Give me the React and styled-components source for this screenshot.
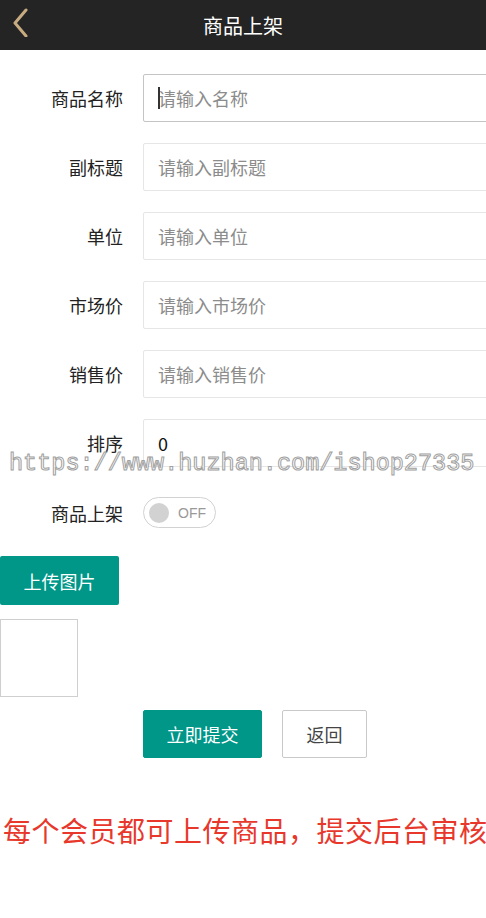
import styled, {createGlobalStyle} from "styled-components";

const GlobalStyle = createGlobalStyle`
  html, body {
    margin: 0;
    padding: 0;
    background: #fff;
    overflow-x: hidden;
  }
  body {
    font-family: "Noto Sans CJK SC", "Noto Sans", sans-serif;
    color: #333;
  }
`;

const fields = [
    {label: "商品名称", placeholder: "请输入名称", focus: true},
    {label: "副标题", placeholder: "请输入副标题"},
    {label: "单位", placeholder: "请输入单位"},
    {label: "市场价", placeholder: "请输入市场价"},
    {label: "销售价", placeholder: "请输入销售价"},
    {label: "排序", value: "0"},
];

export default function App() {
    return (
        <Page>
            <GlobalStyle/>
            <Header>
                <BackIcon width="20" height="30" viewBox="0 0 20 30">
                    <path d="M15 3 L4 16 L15 29" fill="none" stroke="#c8ab80" strokeWidth="3" strokeLinecap="round"
                          strokeLinejoin="round"/>
                </BackIcon>
                <Title>商品上架</Title>
            </Header>

            <Form>
                {fields.map((f) => (
                    <Row key={f.label}>
                        <Label>{f.label}</Label>
                        <Input focus={f.focus}>
                            {f.focus && <Caret/>}
                            {f.value ? <Value>{f.value}</Value> : <Placeholder>{f.placeholder}</Placeholder>}
                        </Input>
                    </Row>
                ))}

                <SwitchRow>
                    <Label>商品上架</Label>
                    <Switch>
                        <Knob/>
                        <SwitchText>OFF</SwitchText>
                    </Switch>
                </SwitchRow>

                <UploadButton>上传图片</UploadButton>
                <ImageBox/>

                <Actions>
                    <Button primary>立即提交</Button>
                    <Button>返回</Button>
                </Actions>
            </Form>

            <Notice>每个会员都可上传商品，提交后台审核</Notice>

            <Watermark>https://www.huzhan.com/ishop27335</Watermark>
        </Page>
    );
}

const Page = styled.div`
  position: relative;
  width: 486px;
  min-height: 918px;
  overflow: hidden;
`;

const Header = styled.div`
  height: 50px;
  background: #242424;
  display: flex;
  align-items: center;
  justify-content: center;
  position: relative;
`;

const BackIcon = styled.svg`
  position: absolute;
  left: 11px;
  top: 7px;
`;

const Title = styled.div`
  color: #fff;
  font-size: 20px;
`;

const Form = styled.div`
  padding-top: 24px;
  display: flex;
  flex-direction: column;
`;

const Row = styled.div`
  display: flex;
  align-items: center;
  height: 48px;
  margin-bottom: 21px;
`;

const Label = styled.div`
  width: 143px;
  flex-shrink: 0;
  text-align: right;
  padding-right: 20px;
  box-sizing: border-box;
  font-size: 18px;
  color: #222;
`;

const Input = styled.div`
  width: 380px;
  flex-shrink: 0;
  height: 48px;
  box-sizing: border-box;
  border: 1px solid ${(p) => (p.focus ? "#c4c4c4" : "#e6e6e6")};
  border-radius: 2px;
  display: flex;
  align-items: center;
  padding-left: 14px;
  font-size: 18px;
  position: relative;
`;

const Caret = styled.span`
  width: 1.5px;
  height: 22px;
  background: #333;
  position: absolute;
  left: 14px;
`;

const Placeholder = styled.span`
  color: #8c8c8c;
`;

const Value = styled.span`
  color: #111;
`;

const SwitchRow = styled.div`
  display: flex;
  align-items: center;
  height: 31px;
  margin-top: 9px;
`;

const Switch = styled.div`
  width: 73px;
  height: 31px;
  box-sizing: border-box;
  border: 1px solid #d2d2d2;
  border-radius: 16px;
  display: flex;
  align-items: center;
  padding-left: 5px;
  gap: 9px;
`;

const Knob = styled.div`
  width: 20px;
  height: 20px;
  border-radius: 50%;
  background: #d2d2d2;
`;

const SwitchText = styled.span`
  font-family: "Liberation Sans", Arial, sans-serif;
  font-size: 14px;
  color: #999;
`;

const UploadButton = styled.div`
  margin-top: 28px;
  width: 119px;
  height: 49px;
  background: #009688;
  border-radius: 2px;
  color: #fff;
  font-size: 18px;
  display: flex;
  align-items: center;
  justify-content: center;
`;

const ImageBox = styled.div`
  margin-top: 14px;
  width: 78px;
  height: 78px;
  box-sizing: border-box;
  border: 1px solid #cfcfcf;
`;

const Actions = styled.div`
  margin-top: 13px;
  padding-left: 143px;
  display: flex;
  gap: 20px;
`;

const Button = styled.div`
  width: ${(p) => (p.primary ? "119px" : "85px")};
  height: 48px;
  box-sizing: border-box;
  border-radius: 2px;
  background: ${(p) => (p.primary ? "#009688" : "#fff")};
  border: 1px solid ${(p) => (p.primary ? "#009688" : "#c9c9c9")};
  color: ${(p) => (p.primary ? "#fff" : "#444")};
  font-size: 18px;
  display: flex;
  align-items: center;
  justify-content: center;
`;

const Notice = styled.div`
  margin-top: 55px;
  padding-left: 3px;
  font-size: 28px;
  line-height: 34px;
  letter-spacing: 0.5px;
  color: #e8382c;
  white-space: nowrap;
`;

const Watermark = styled.div`
  position: absolute;
  left: 9px;
  top: 450px;
  font-family: "Liberation Mono", "DejaVu Sans Mono", monospace;
  font-size: 23.5px;
  color: #fff;
  -webkit-text-stroke: 1px #a0a0a0;
  white-space: nowrap;
  pointer-events: none;
`;
